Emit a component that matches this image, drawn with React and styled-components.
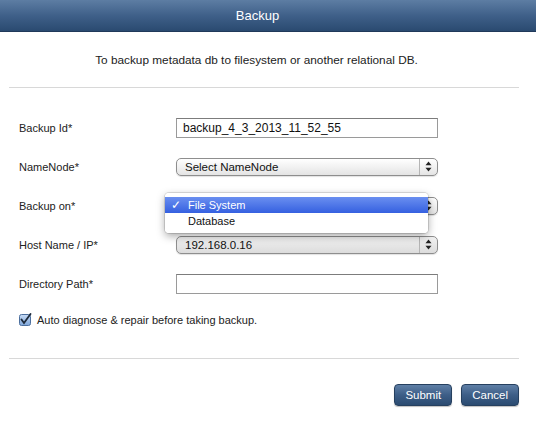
import React from 'react';
import styled, { createGlobalStyle } from 'styled-components';

const GlobalStyle = createGlobalStyle`
  html, body {
    margin: 0;
    padding: 0;
    background: #ffffff;
  }
  body {
    font-family: "Liberation Sans", Arial, sans-serif;
    color: #222;
  }
`;

const Modal = styled.div`
  width: 536px;
  height: 425px;
  background: #fff;
  display: flex;
  flex-direction: column;
`;

const Header = styled.div`
  height: 32px;
  padding-right: 21px;
  background: linear-gradient(to bottom, #5d7da3 0%, #3f6089 50%, #2a4a70 100%);
  display: flex;
  align-items: center;
  justify-content: center;
  color: #fff;
  font-size: 13px;
  border-bottom: 1px solid #20395a;
  box-sizing: border-box;
`;

const Intro = styled.p`
  margin: 0;
  height: 55px;
  padding-right: 23px;
  display: flex;
  align-items: center;
  justify-content: center;
  font-size: 11.8px;
  color: #222;
`;

const Divider = styled.hr`
  margin: ${p => p.$top || 0}px 17px 0 9px;
  border: 0;
  border-top: 1px solid #d8d8d8;
  height: 0;
`;

const Form = styled.div`
  padding: 20px 0 0 19px;
  display: flex;
  flex-direction: column;
`;

const Row = styled.div`
  height: 39px;
  display: grid;
  grid-template-columns: 157px 262px;
  align-items: center;
  position: relative;
`;

const Label = styled.label`
  font-size: 11px;
  color: #222;
`;

const TextInput = styled.div`
  height: 20px;
  box-sizing: border-box;
  border: 1px solid #9a9a9a;
  border-top-color: #7c7c7c;
  background: #fff;
  font-size: 12px;
  padding: 0 6px;
  display: flex;
  align-items: center;
  color: #111;
`;

const Select = styled.div`
  position: relative;
  height: 18px;
  box-sizing: border-box;
  border: 1px solid #8e8e8e;
  border-radius: 5px;
  background: ${p => (p.$dim
    ? 'linear-gradient(to bottom, #f2f2f2, #dcdcdc)'
    : 'linear-gradient(to bottom, #ffffff, #e4e4e4)')};
  font-size: 11.5px;
  padding: 0 0 0 8px;
  display: flex;
  align-items: center;
  color: #111;
  box-shadow: 0 1px 1px rgba(0, 0, 0, 0.12);
`;

const Arrows = styled.span`
  position: absolute;
  right: 0;
  top: 0;
  bottom: 0;
  width: 17px;
  border-left: 1px solid #b5b5b5;
  display: flex;
  align-items: center;
  justify-content: center;
`;

/* open popup of the "Backup on" select, lies over the closed control */
const Menu = styled.div`
  position: absolute;
  left: 146px;
  top: 7px;
  width: 263px;
  box-sizing: border-box;
  padding: 4px 0;
  background: rgba(255, 255, 255, 0.98);
  border-radius: 4px;
  box-shadow: 0 3px 8px rgba(0, 0, 0, 0.35), 0 0 0 1px rgba(0, 0, 0, 0.12);
  z-index: 2;
`;

const MenuItem = styled.div`
  height: 16px;
  display: flex;
  align-items: center;
  font-size: 11px;
  padding-left: 23px;
  position: relative;
  color: ${p => (p.$active ? '#fff' : '#111')};
  background: ${p => (p.$active ? 'linear-gradient(to bottom, #6a8ff0, #3560e0)' : 'transparent')};
`;

const Check = styled.span`
  position: absolute;
  left: 6px;
  top: 0;
  font-size: 12px;
  line-height: 16px;
`;

const CheckRow = styled.div`
  margin-top: 7px;
  height: 20px;
  display: flex;
  align-items: center;
  gap: 5px;
  font-size: 11px;
`;

const Footer = styled.div`
  display: flex;
  justify-content: flex-end;
  gap: 9px;
  padding: 25px 17px 0 0;
`;

const Button = styled.button`
  height: 22px;
  padding: 0 10px;
  border: 1px solid #26405f;
  border-radius: 4px;
  background: linear-gradient(to bottom, #5f7fa6 0%, #3d5e87 50%, #2b4b71 100%);
  color: #fff;
  font-family: "Liberation Sans", Arial, sans-serif;
  font-size: 11.5px;
  box-shadow: 0 1px 1px rgba(0, 0, 0, 0.25);
`;

const SelectArrows = () => (
  <Arrows>
    <svg width="7" height="11" viewBox="0 0 7 11">
      <path d="M3.5 0.5 L6.5 4.2 H0.5 Z" fill="#222" />
      <path d="M3.5 10.5 L6.5 6.8 H0.5 Z" fill="#222" />
    </svg>
  </Arrows>
);

const CheckBox = () => (
  <svg width="13" height="14" viewBox="0 0 13 14">
    <defs>
      <linearGradient id="cb" x1="0" y1="0" x2="0" y2="1">
        <stop offset="0" stopColor="#c9dcf5" />
        <stop offset="1" stopColor="#7ea6da" />
      </linearGradient>
    </defs>
    <rect x="0.5" y="1.5" width="11" height="11" rx="2" fill="url(#cb)" stroke="#4c6f9e" />
    <path d="M2.5 6.5 L5 10 L11.5 1" fill="none" stroke="#1d2a3a" strokeWidth="1.8" strokeLinecap="round" />
  </svg>
);

export default function App() {
  return (
    <>
      <GlobalStyle />
      <Modal>
        <Header>Backup</Header>
        <Intro>To backup metadata db to filesystem or another relational DB.</Intro>
        <Divider />
        <Form>
          <Row>
            <Label>Backup Id*</Label>
            <TextInput>backup_4_3_2013_11_52_55</TextInput>
          </Row>
          <Row>
            <Label>NameNode*</Label>
            <Select>Select NameNode<SelectArrows /></Select>
          </Row>
          <Row>
            <Label>Backup on*</Label>
            <Select><SelectArrows /></Select>
            <Menu>
              <MenuItem $active><Check>✓</Check>File System</MenuItem>
              <MenuItem>Database</MenuItem>
            </Menu>
          </Row>
          <Row>
            <Label>Host Name / IP*</Label>
            <Select $dim>192.168.0.16<SelectArrows /></Select>
          </Row>
          <Row>
            <Label>Directory Path*</Label>
            <TextInput />
          </Row>
          <CheckRow>
            <CheckBox />
            Auto diagnose &amp; repair before taking backup.
          </CheckRow>
        </Form>
        <Divider $top={28} />
        <Footer>
          <Button>Submit</Button>
          <Button>Cancel</Button>
        </Footer>
      </Modal>
    </>
  );
}
